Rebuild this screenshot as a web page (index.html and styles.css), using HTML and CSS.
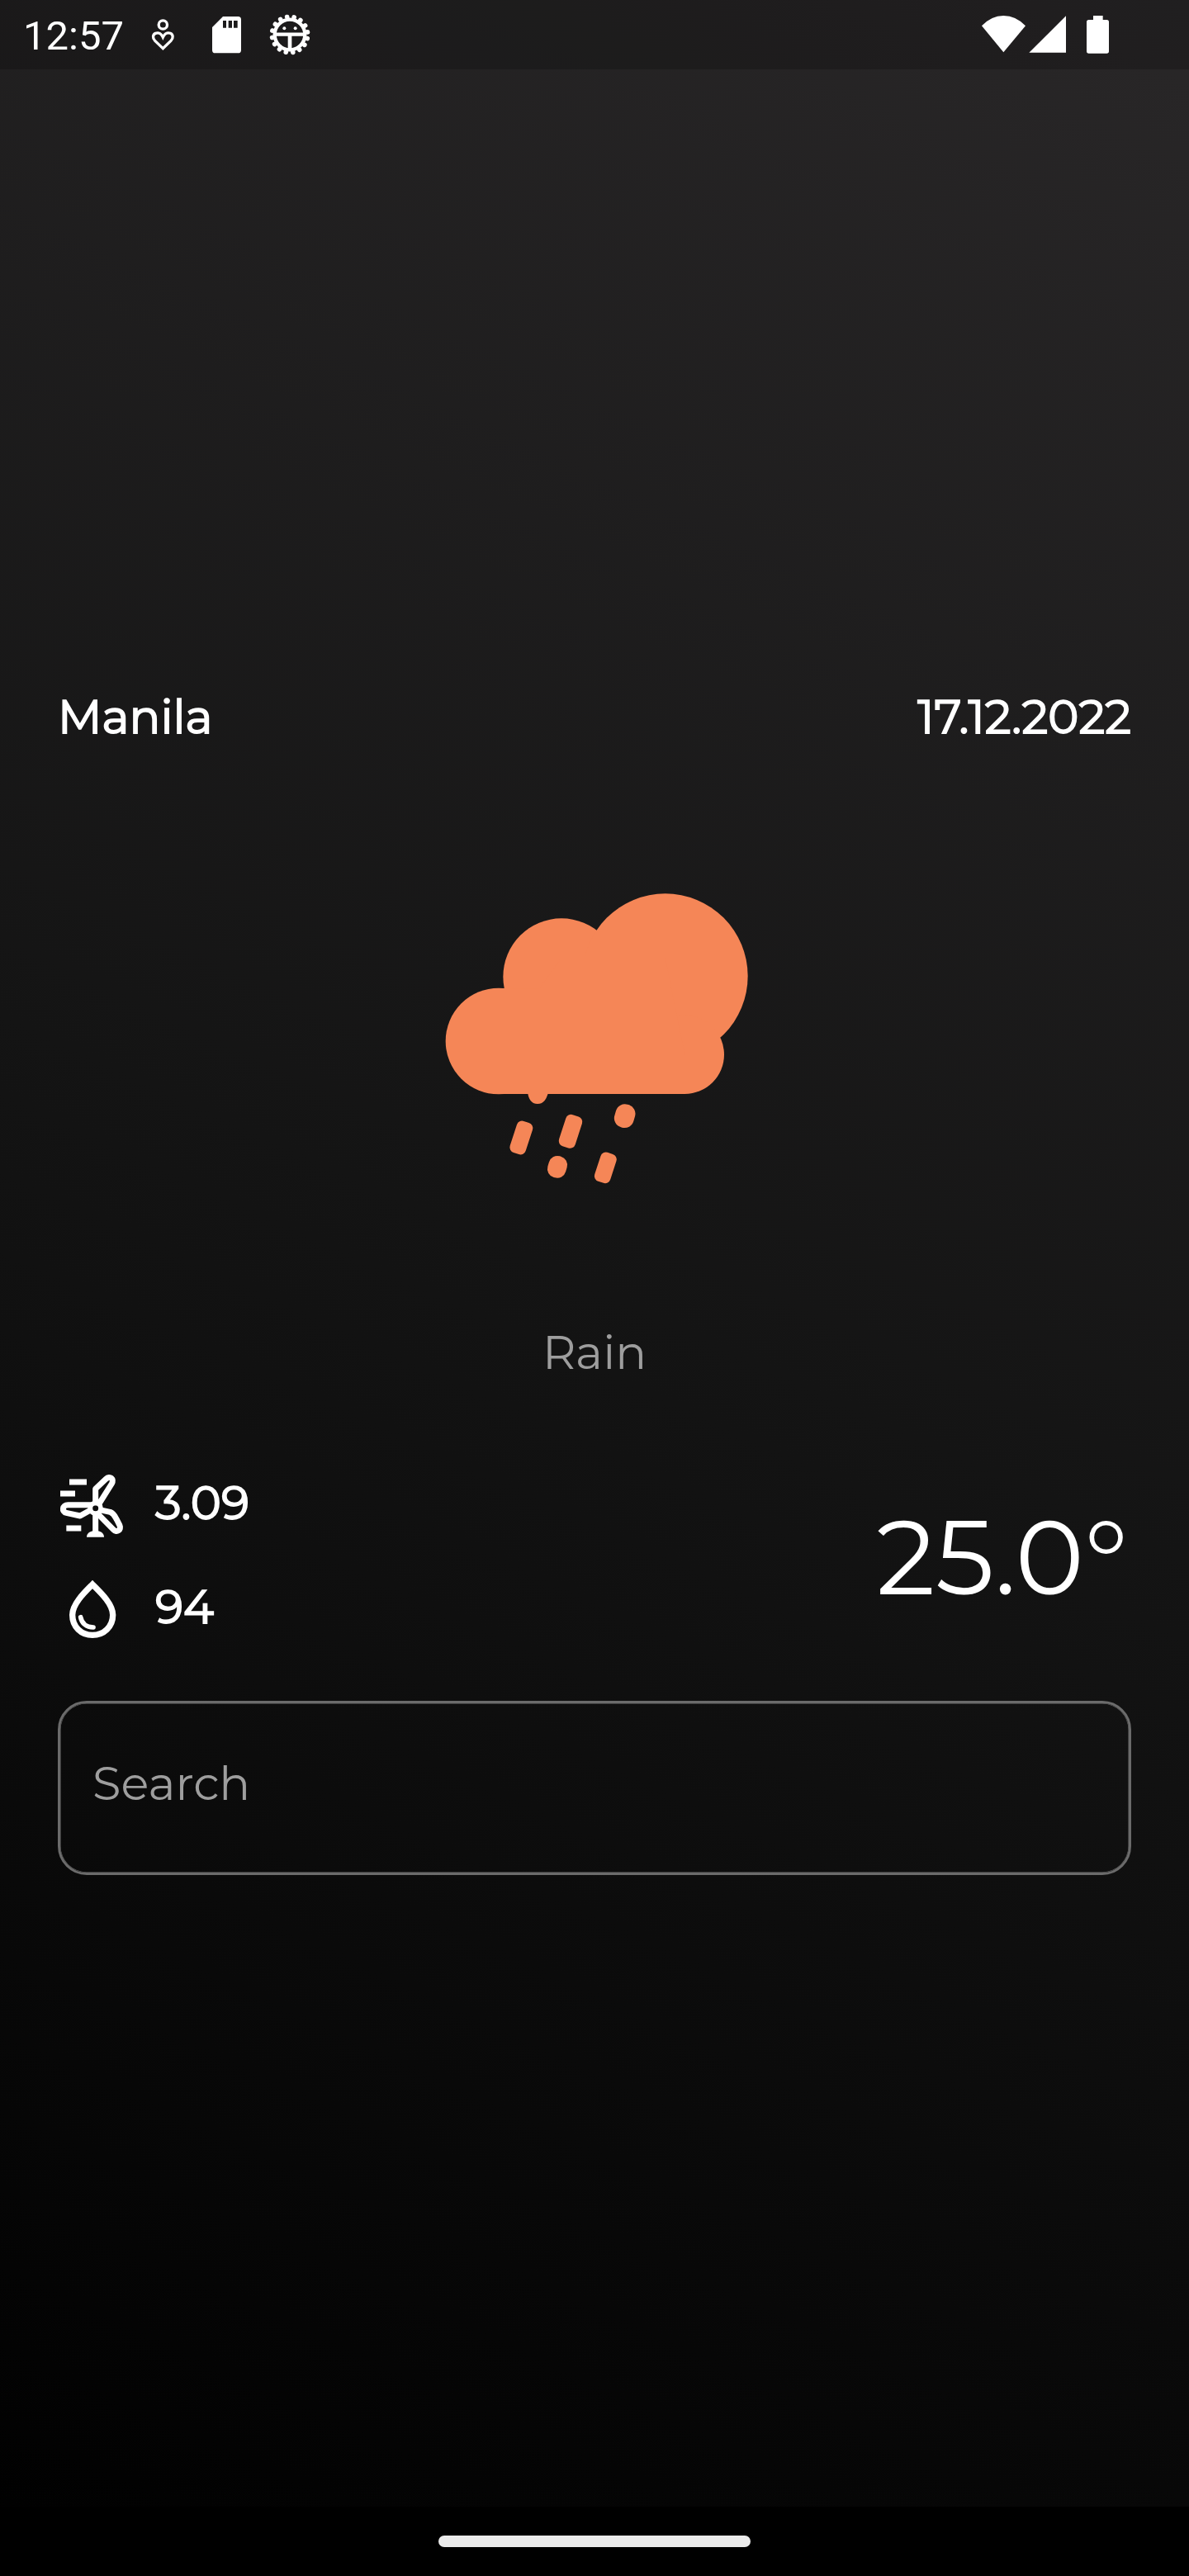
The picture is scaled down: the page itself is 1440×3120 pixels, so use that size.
FILE: index.html
```html
<!DOCTYPE html>
<html lang="en">
<head>
<meta charset="utf-8">
<title>Weather</title>
<link rel="stylesheet" href="styles.css">
</head>
<body>
<div class="screen">
  <header class="status">
    <span class="clock">12:57</span>
    <svg class="ic-care" viewBox="546 60 93 132" fill="none" stroke="#fff" stroke-width="10"><circle cx="592" cy="90" r="15.500"/><path d="M592 176L563 148C553 138 555 125 565 121C577 116 587 124 592 135C597 124 607 116 619 121C629 125 631 138 621 148Z"/></svg>
    <svg class="ic-sd" viewBox="768 57 111 138"><path fill="#fff" fill-rule="evenodd" d="M810 60H865Q876 60 876 71V182Q876 193 865 193H782Q771 193 771 182V99ZM810 75V101H822V75ZM830 75V101H843V75ZM849 75V101H863V75Z"/></svg>
    <svg class="ic-bug" viewBox="976 49 156 156"><g fill="none" stroke="#fff"><circle cx="1054" cy="127" r="55" stroke-width="13"/><circle cx="1054" cy="127" r="65" stroke-width="17" stroke-linecap="round" stroke-dasharray="0.1 25.427" transform="rotate(12 1054 127)"/><path stroke-width="13" d="M1000 126H1108"/><path stroke-width="14" d="M1054 128V182"/></g><g fill="#fff"><circle cx="1034" cy="104" r="6"/><circle cx="1074" cy="104" r="6"/></g></svg>
    <svg class="ic-system" viewBox="81 54 468 144" fill="#fff"><path d="M84 94Q119 57 163 57Q208 57 243 94L163 190Z"/><path d="M390 58V191H256Z"/><path d="M489 57H524V72H538Q546 72 546 80V186Q546 194 538 194H473Q465 194 465 186V80Q465 72 473 72H489Z"/></svg>
  </header>
  <main class="weather">
    <div class="heading"><span class="city">Manila</span><span class="date">17.12.2022</span></div>
    <svg class="cloud" viewBox="0 0 1200 1200" fill="#f58657">
      <circle cx="252" cy="603" r="193"/><circle cx="480" cy="369" r="212"/><circle cx="857" cy="367" r="300"/><circle cx="928" cy="652" r="143"/>
      <path d="M252 412H400L480 300H857L928 652V795H252Z"/>
      <path d="M357 785C359 812 370 831 393 831C416 831 427 811 433 785Z"/>
      <rect x="-30" y="-60" width="60" height="120" rx="20" transform="translate(334 954) rotate(18)"/>
      <rect x="-31" y="-60" width="62" height="120" rx="20" transform="translate(513 931) rotate(18)"/>
      <rect x="-30" y="-55" width="60" height="110" rx="20" transform="translate(640 1063) rotate(18)"/>
      <rect x="-36" y="-43" width="72" height="86" rx="34" transform="translate(710 875) rotate(16)"/>
      <rect x="-34" y="-40" width="68" height="80" rx="32" transform="translate(465 1060) rotate(16)"/>
    </svg>
    <p class="condition">Rain</p>
    <section class="metrics">
      <div class="details">
        <div class="detail">
          <svg class="ic" viewBox="60 66 252 252" fill="none" stroke="#fff" stroke-width="21"><path d="M102 105H165M69 147H123M91 273H145"/><path stroke-linejoin="round" d="M197 190V130L235 94C249 81 266 93 256 111L210 184M184 188H97C76 188 73 213 91 217L141 228L184 204M212 206L250 214C265 220 267 229 275 243L285 263C292 278 274 291 262 278L205 220"/><path d="M197 215V290"/><circle cx="197" cy="200" r="19" stroke-width="17"/><path fill="#fff" stroke="none" d="M165 305C165 291 178 282 197 282C216 282 228 291 228 305Z"/></svg>
          <span class="value">3.09</span>
        </div>
        <div class="detail">
          <svg class="ic" viewBox="60 444 252 252" fill="none" stroke="#fff"><path stroke-width="22" d="M186 477C160 503 113 547 113 588C113 631 145 661 186 661C227 661 260 631 260 588C260 547 212 503 186 477Z"/><path stroke-width="17" stroke-linecap="round" d="M143 596C147 619 164 632 189 633"/></svg>
          <span class="value">94</span>
        </div>
      </div>
      <span class="temperature">25.0°</span>
    </section>
    <input class="search" type="text" placeholder="Search" aria-label="Search">
  </main>
  <footer class="nav"><div class="handle"></div></footer>
</div>
</body>
</html>
```
FILE: styles.css
```css
* { box-sizing: border-box; }
body { margin: 0; background: #000; }
.screen {
  width: 1440px;
  height: 3120px;
  display: flex;
  flex-direction: column;
  color: #fff;
  font-family: "Montserrat", "Inter", sans-serif;
  background: linear-gradient(204.775deg, #292728 0%, #141414 50%, #000 100%);
}
svg { display: block; flex: none; }
.status {
  height: 84px;
  display: flex;
  align-items: flex-start;
  background: rgba(0, 0, 0, .2);
}
.clock {
  width: 123px;
  margin: 14px 0 0 28px;
  font: 400 49px/59px Roboto, sans-serif;
  white-space: nowrap;
}
.ic-care { width: 31px; height: 44px; margin: 20px 0 0 31px; }
.ic-sd { width: 37px; height: 46px; margin: 19px 0 0 43px; }
.ic-bug { width: 52px; height: 52px; margin: 16px 0 0 32px; }
.ic-system { width: 156px; height: 48px; margin: 18px 96px 0 auto; }
.weather {
  flex: 1;
  padding: 748px 70px 0;
  display: flex;
  flex-direction: column;
}
.heading {
  height: 72px;
  display: flex;
  justify-content: space-between;
}
/* Regular weight thickened by an outline, so the advances stay those of the regular face */
.city, .date, .value {
  font-size: 56px;
  font-weight: 400;
  line-height: 72px;
  -webkit-text-stroke: 1.75px #fff;
}
.cloud { width: 400px; height: 400px; margin: 156px auto 0; }
.condition {
  margin: 142px 0 0;
  font-size: 56px;
  font-weight: 400;
  line-height: 72px;
  text-align: center;
  color: #9e9e9e;
}
.metrics {
  margin-top: 108px;
  height: 210px;
  display: flex;
  justify-content: space-between;
  align-items: center;
}
.details { display: flex; flex-direction: column; gap: 42px; }
.detail { display: flex; align-items: center; gap: 34px; height: 84px; }
.ic { width: 84px; height: 84px; }
.value { padding-bottom: 8px; }
.temperature {
  margin: 0 4px 2px 0;
  font-size: 126px;
  font-weight: 400;
  line-height: 160px;
}
.search {
  height: 211px;
  margin-top: 68px;
  padding: 0 0 11px 39px;
  border: 3px solid #6b6b6b;
  border-radius: 35px;
  box-shadow: inset 0 0 0 .5px #6b6b6b;
  background: transparent;
  color: #fff;
  font: 400 56px "Montserrat", "Inter", sans-serif;
}
.search::placeholder { color: #9e9e9e; opacity: 1; }
.nav {
  height: 84px;
  display: flex;
  justify-content: center;
  align-items: center;
  background: #000;
}
.handle { width: 378px; height: 14px; border-radius: 7px; background: #ebebeb; }
```
